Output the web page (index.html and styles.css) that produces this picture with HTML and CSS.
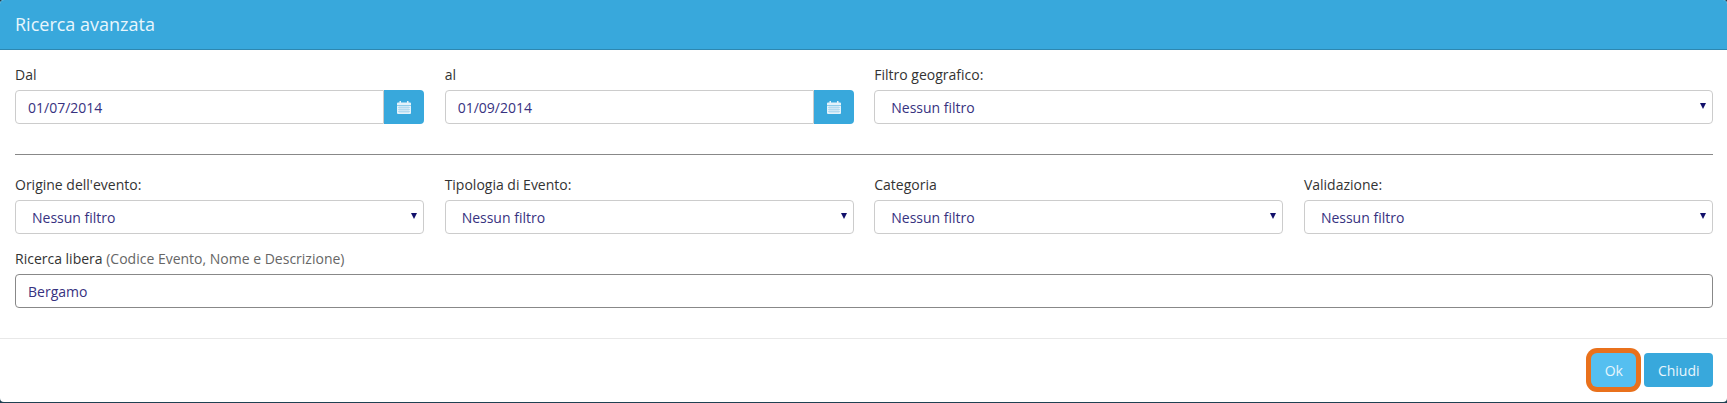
FILE: index.html
```html
<!DOCTYPE html>
<html lang="en">
<head>
  <meta charset="UTF-8" />
  <title>Ricerca avanzata</title>
  <link rel="stylesheet" href="styles.css">
</head>
<body>
  <div class="modal">
    <div class="modal-header">Ricerca avanzata</div>
    <div class="modal-body">
      <div class="row">
        <div class="field">
          <label>Dal</label>
          <div class="input-group">
            <input type="text" class="control" value="01/07/2014" />
            <button class="cal-btn" type="button">
              <svg viewBox="0 0 14 14" width="14" height="14">
                <path fill="#e4f2fa" d="M0 3.500a1 1 0 0 1 1-1h1.500V1h1.500v1.500h6V1h1.500v1.500H13a1 1 0 0 1 1 1V5H0z" />
                <path fill="#e4f2fa" d="M0 5.500h14V13a1 1 0 0 1-1 1H1a1 1 0 0 1-1-1z" />
                <path stroke="#9fd2ec" stroke-width=".6" d="M1 7.500h12M1 9.500h12M1 11.500h12M3 6v7M5 6v7M7 6v7M9 6v7M11 6v7" />
              </svg>
            </button>
          </div>
        </div>
        <div class="field">
          <label>al</label>
          <div class="input-group">
            <input type="text" class="control" value="01/09/2014" />
            <button class="cal-btn" type="button">
              <svg viewBox="0 0 14 14" width="14" height="14">
                <path fill="#e4f2fa" d="M0 3.500a1 1 0 0 1 1-1h1.500V1h1.500v1.500h6V1h1.500v1.500H13a1 1 0 0 1 1 1V5H0z" />
                <path fill="#e4f2fa" d="M0 5.500h14V13a1 1 0 0 1-1 1H1a1 1 0 0 1-1-1z" />
                <path stroke="#9fd2ec" stroke-width=".6" d="M1 7.500h12M1 9.500h12M1 11.500h12M3 6v7M5 6v7M7 6v7M9 6v7M11 6v7" />
              </svg>
            </button>
          </div>
        </div>
        <div class="field wide">
          <label>Filtro geografico:</label>
          <div class="select-wrap">
            <select class="control"><option>Nessun filtro</option></select>
          </div>
        </div>
      </div>

      <hr class="divider" />

      <div class="row">
        <div class="field">
          <label>Origine dell'evento:</label>
          <div class="select-wrap">
            <select class="control"><option>Nessun filtro</option></select>
          </div>
        </div>
        <div class="field">
          <label>Tipologia di Evento:</label>
          <div class="select-wrap">
            <select class="control"><option>Nessun filtro</option></select>
          </div>
        </div>
        <div class="field">
          <label>Categoria</label>
          <div class="select-wrap">
            <select class="control"><option>Nessun filtro</option></select>
          </div>
        </div>
        <div class="field">
          <label>Validazione:</label>
          <div class="select-wrap">
            <select class="control"><option>Nessun filtro</option></select>
          </div>
        </div>
      </div>

      <div class="field free-search">
        <label>Ricerca libera <span class="hint">(Codice Evento, Nome e Descrizione)</span></label>
        <input type="text" class="control focused" value="Bergamo" />
      </div>
    </div>
    <div class="modal-footer">
      <button class="btn btn-ok" type="button">Ok</button>
      <button class="btn" type="button">Chiudi</button>
    </div>
  </div>
</body>
</html>
```

FILE: styles.css
```css
* {
  box-sizing: border-box;
}
body {
  margin: 0;
  height: 403px;
  overflow: hidden;
  background-color: #1f4152;
  font-family: "Open Sans", sans-serif;
  font-size: 14px;
  color: #333;
}
.modal {
  height: 402px;
  background-color: #fff;
  border-radius: 4px;
  overflow: hidden;
}
.modal-header {
  height: 50px;
  padding: 0 15px;
  background-color: #38a8dc;
  border-bottom: 1px solid #2d87b0;
  color: #e8f6fc;
  font-size: 18px;
  line-height: 48px;
}
.modal-body {
  height: 289px;
  padding: 15px 14px 0 15px;
  border-bottom: 1px solid #e8e8e8;
}
.row {
  display: grid;
  grid-template-columns: repeat(4, 1fr);
  column-gap: 20.5px;
}
.wide {
  grid-column: span 2;
}
label {
  display: block;
  height: 25px;
  line-height: 20px;
}
.hint {
  color: #666;
}
.control {
  display: block;
  width: 100%;
  height: 34px;
  padding: 0 12px;
  border: 1px solid #ccc;
  border-radius: 4px;
  background-color: #fff;
  color: #37327f;
  font-family: inherit;
  font-size: 14px;
}
.focused {
  border-color: #888;
}
.input-group {
  display: flex;
}
.input-group .control {
  border-radius: 4px 0 0 4px;
}
.cal-btn {
  flex: 0 0 40px;
  height: 34px;
  padding: 0;
  border: none;
  border-radius: 0 4px 4px 0;
  background-color: #38a8dc;
}
.cal-btn svg {
  display: block;
  margin: auto;
}
.select-wrap {
  position: relative;
}
.select-wrap select {
  appearance: none;
  padding-left: 16px;
}
.select-wrap::after {
  content: "";
  position: absolute;
  top: 13px;
  right: 7px;
  border-left: 3px solid transparent;
  border-right: 3px solid transparent;
  border-top: 6px solid #12106b;
}
.divider {
  margin: 30px 0 20px;
  border: none;
  border-top: 1px solid #888;
}
.free-search {
  margin-top: 15px;
}
.modal-footer {
  display: flex;
  justify-content: flex-end;
  gap: 8px;
  padding: 14px 14px 0;
}
.btn {
  height: 34px;
  padding: 0 13.5px;
  border: none;
  border-radius: 4px;
  background-color: #38a8dc;
  color: #e8f6fc;
  font-family: inherit;
  font-size: 14px;
}
.btn-ok {
  background-color: #55bff0;
  box-shadow: 0 0 0 5px #e9711c;
  border-radius: 6px;
}
```
